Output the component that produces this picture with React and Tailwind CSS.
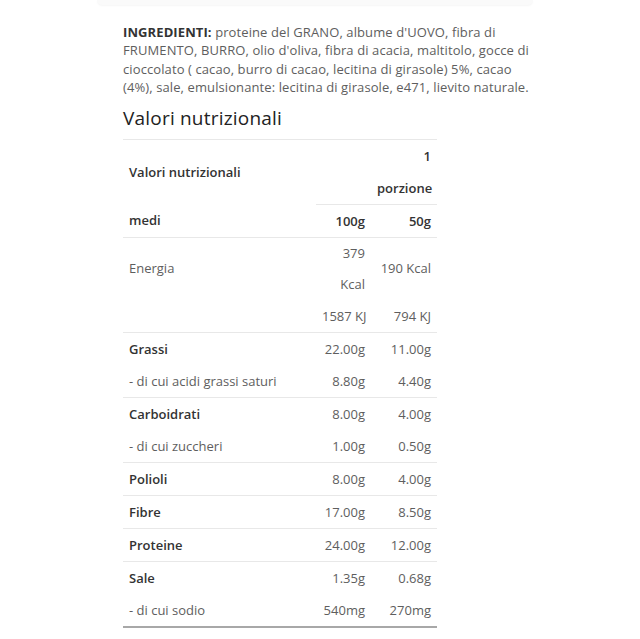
const rows = [
  { label: "Grassi", bold: true, a: "22.00g", b: "11.00g", line: false },
  { label: "- di cui acidi grassi saturi", a: "8.80g", b: "4.40g", line: true },
  { label: "Carboidrati", bold: true, a: "8.00g", b: "4.00g", line: false },
  { label: "- di cui zuccheri", a: "1.00g", b: "0.50g", line: true },
  { label: "Polioli", bold: true, a: "8.00g", b: "4.00g", line: true },
  { label: "Fibre", bold: true, a: "17.00g", b: "8.50g", line: true },
  { label: "Proteine", bold: true, a: "24.00g", b: "12.00g", line: true },
  { label: "Sale", bold: true, a: "1.35g", b: "0.68g", line: false },
  { label: "- di cui sodio", a: "540mg", b: "270mg", last: true },
];

const App = () => {
  return (
    <div className="w-[640px] min-h-[639px] bg-white font-['Open_Sans',sans-serif] text-[#5e5e5e]">
      {/* faint card edge at the top */}
      <div className="ml-[97px] w-[436px] h-[5px] rounded-b-xl bg-[#fafafa] shadow-[0_1px_2px_rgba(0,0,0,0.04)]"></div>

      <div className="mx-auto w-[394px] pt-[18px]">
        <p className="text-[13px] leading-[18.4px] tracking-[0.1px] whitespace-nowrap">
          <span className="font-bold text-[#333]">INGREDIENTI:</span> proteine del GRANO, albume d'UOVO, fibra di
          <br />
          FRUMENTO, BURRO, olio d'oliva, fibra di acacia, maltitolo, gocce di
          <br />
          cioccolato ( cacao, burro di cacao, lecitina di girasole) 5%, cacao
          <br />
          (4%), sale, emulsionante: lecitina di girasole, e471, lievito naturale.
        </p>

        <h2 className="mt-[9px] text-[19px] leading-[24px] tracking-[0.2px] text-[#222]">Valori nutrizionali</h2>

        <table className="mt-[9px] w-[314px] table-fixed border-collapse border-t border-[#e8e8e8] text-[13px] leading-[32px]">
          <colgroup>
            <col className="w-[193px]" />
            <col className="w-[55px]" />
            <col className="w-[66px]" />
          </colgroup>
          <tbody>
            <tr>
              <td className="px-[6px] align-middle font-semibold text-[#333]">Valori nutrizionali</td>
              <td className="border-b border-[#e8e8e8]"></td>
              <td className="px-[6px] text-right font-semibold text-[#333] border-b border-[#e8e8e8]">
                1
                <br />
                porzione
              </td>
            </tr>
            <tr className="border-b border-[#e8e8e8]">
              <td className="px-[6px] font-semibold text-[#333]">medi</td>
              <td className="px-[6px] text-right font-semibold text-[#333]">100g</td>
              <td className="px-[6px] text-right font-semibold text-[#333]">50g</td>
            </tr>
            <tr className="leading-[31.5px]">
              <td className="px-[6px] align-middle">Energia</td>
              <td className="px-[6px] text-right">
                379
                <br />
                Kcal
              </td>
              <td className="px-[6px] text-right align-middle whitespace-nowrap">190 Kcal</td>
            </tr>
            <tr className="border-b border-[#e8e8e8] leading-[31px]">
              <td className="px-[6px]"></td>
              <td className="px-[6px] text-right whitespace-nowrap">1587 KJ</td>
              <td className="px-[6px] text-right whitespace-nowrap">794 KJ</td>
            </tr>
            {rows.map((r) => (
              <tr
                key={r.label}
                className={
                  r.last
                    ? "border-b-2 border-[#a8a8a8]"
                    : r.line
                    ? "border-b border-[#e8e8e8]"
                    : ""
                }
              >
                <td className={`px-[6px] whitespace-nowrap ${r.bold ? "font-semibold text-[#333]" : ""}`}>{r.label}</td>
                <td className="px-[6px] text-right whitespace-nowrap">{r.a}</td>
                <td className="px-[6px] text-right whitespace-nowrap">{r.b}</td>
              </tr>
            ))}
          </tbody>
        </table>
      </div>
    </div>
  );
};

export default App;
